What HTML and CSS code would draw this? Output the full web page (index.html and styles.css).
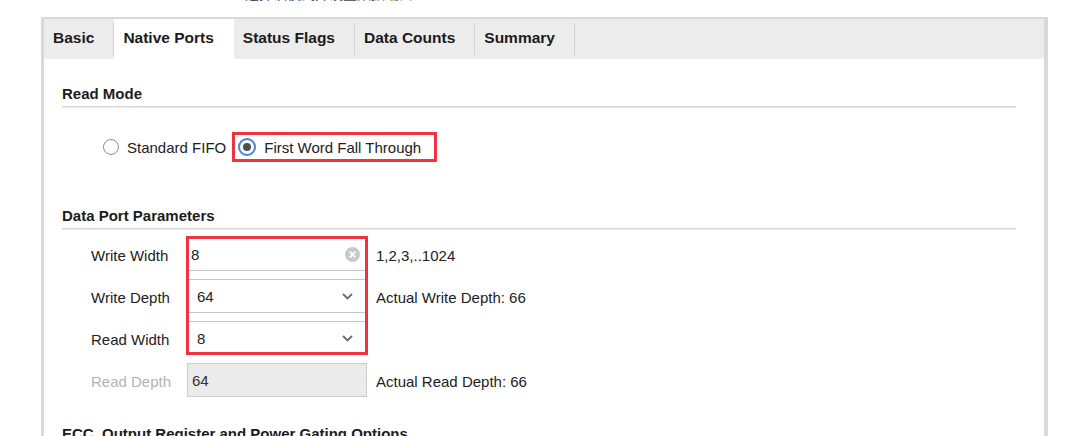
FILE: index.html
```html
<!DOCTYPE html>
<html lang="en">
<head>
  <meta charset="UTF-8" />
  <title>FIFO Generator - Native Ports</title>
  <link rel="stylesheet" href="styles.css">
</head>
<body>

  <div class="caption"><span>选择读模式并设置数据端口</span></div>

  <div class="panel">
    <div class="tabs">
      <div class="tab">Basic</div>
      <div class="tab active">Native Ports</div>
      <div class="tab">Status Flags</div>
      <div class="tab">Data Counts</div>
      <div class="tab">Summary</div>
    </div>

    <div class="content">
      <h2 class="section-title">Read Mode</h2>
      <div class="radio-group">
        <label class="radio"><span class="dot"></span>Standard FIFO</label>
        <label class="radio checked marked"><span class="dot"></span>First Word Fall Through</label>
      </div>

      <h2 class="section-title">Data Port Parameters</h2>
      <div class="params">
        <div class="highlight"></div>

        <span class="label">Write Width</span>
        <div class="field text">
          <span>8</span>
          <svg width="15" height="15" viewBox="0 0 16 16"><circle cx="8" cy="8" r="8" fill="#c9c9c9"/><path d="M5 5l6 6M11 5l-6 6" stroke="#fff" stroke-width="2"/></svg>
        </div>
        <span class="hint">1,2,3,..1024</span>

        <span class="label">Write Depth</span>
        <div class="field combo">
          <span>64</span>
          <svg width="11" height="7" viewBox="0 0 11 7"><path d="M1 1l4.5 4.5L10 1" stroke="#6b6b6b" stroke-width="1.8" fill="none"/></svg>
        </div>
        <span class="hint">Actual Write Depth: 66</span>

        <span class="label">Read Width</span>
        <div class="field combo">
          <span>8</span>
          <svg width="11" height="7" viewBox="0 0 11 7"><path d="M1 1l4.5 4.5L10 1" stroke="#6b6b6b" stroke-width="1.8" fill="none"/></svg>
        </div>
        <span class="hint"></span>

        <span class="label disabled">Read Depth</span>
        <div class="field readonly"><span>64</span></div>
        <span class="hint">Actual Read Depth: 66</span>
      </div>

      <h2 class="section-title">ECC, Output Register and Power Gating Options</h2>
    </div>
  </div>

</body>
</html>
```
FILE: styles.css
```css
body {
  font-family: 'Liberation Sans', Arial, sans-serif;
  font-size: 15px;
  color: #222;
  background: #fff;
  margin: 0;
  height: 436px;
  overflow: hidden;
}
.caption {
  height: 3px;
  overflow: hidden;
  padding-left: 245px;
}
.caption span {
  display: block;
  font-family: 'Noto Sans CJK SC', sans-serif;
  font-size: 14px;
  line-height: 16px;
  margin-top: -15px;
  color: #444;
}
.panel {
  margin: 14px 32px 0 41px;
  border: solid #d9d9d9;
  border-width: 2px 4px 0 3px;
  min-height: 430px;
}
.tabs {
  display: flex;
  height: 40px;
  background: #ececec;
}
.tab {
  display: flex;
  align-items: center;
  padding: 0 20px 2px 9px;
  font-size: 15.5px;
  font-weight: bold;
  color: #1b1b1b;
  background: linear-gradient(#d2d2d2, #d2d2d2) right 4px / 1px 32px no-repeat;
}
.tab.active {
  background: #fff;
}
.content {
  padding: 0 28px 0 18px;
}
.section-title {
  margin: 26px 0 0;
  font-size: 15px;
  line-height: 18px;
  font-weight: bold;
  color: #1c1c1c;
  padding-bottom: 3px;
  border-bottom: 1px solid #d4d4d4;
  box-shadow: 0 1px #ececec;
}
.radio-group {
  display: flex;
  align-items: center;
  gap: 6px;
  height: 30px;
  margin-top: 25px;
  padding-left: 41px;
}
.radio {
  display: flex;
  align-items: center;
  gap: 8px;
  height: 30px;
  box-sizing: border-box;
}
.dot {
  display: flex;
  align-items: center;
  justify-content: center;
  width: 16px;
  height: 16px;
  box-sizing: border-box;
  border: 1px solid #8e8e8e;
  border-radius: 50%;
  background: #fff;
}
.radio.checked .dot {
  width: 18px;
  height: 18px;
  border: 2px solid #4a84d6;
}
.radio.checked .dot::after {
  content: '';
  width: 8px;
  height: 8px;
  border-radius: 50%;
  background: #4f4f4f;
}
.radio.marked {
  border: 3px solid #ef3340;
  padding: 0 13px 0 3px;
}
.section-title + .radio-group + .section-title {
  margin-top: 45px;
}
.params {
  position: relative;
  display: grid;
  grid-template-columns: 87px 180px auto;
  grid-auto-rows: 34px;
  column-gap: 9px;
  row-gap: 8px;
  align-items: center;
  margin: 8px 0 0 29px;
}
.highlight {
  position: absolute;
  left: 95px;
  top: -1px;
  width: 182px;
  height: 119px;
  box-sizing: border-box;
  border: 3px solid #ef3340;
  z-index: 1;
}
.label {
  padding-top: 3px;
}
.label.disabled {
  color: #b3b3b3;
}
.field {
  display: flex;
  align-items: center;
  justify-content: space-between;
  height: 34px;
  box-sizing: border-box;
  border: 1px solid #c6c6c6;
  background: #fff;
}
.field.text {
  padding: 0 6px 0 3px;
}
.field.combo {
  padding: 0 13px 0 9px;
}
.field.readonly {
  background: #ebebeb;
  border-color: #cbcbcb;
  padding: 0 4px;
  color: #333;
}
.hint {
  padding-top: 2px;
}
.section-title:last-child {
  margin-top: 28px;
  border-bottom: none;
  box-shadow: none;
}
```
